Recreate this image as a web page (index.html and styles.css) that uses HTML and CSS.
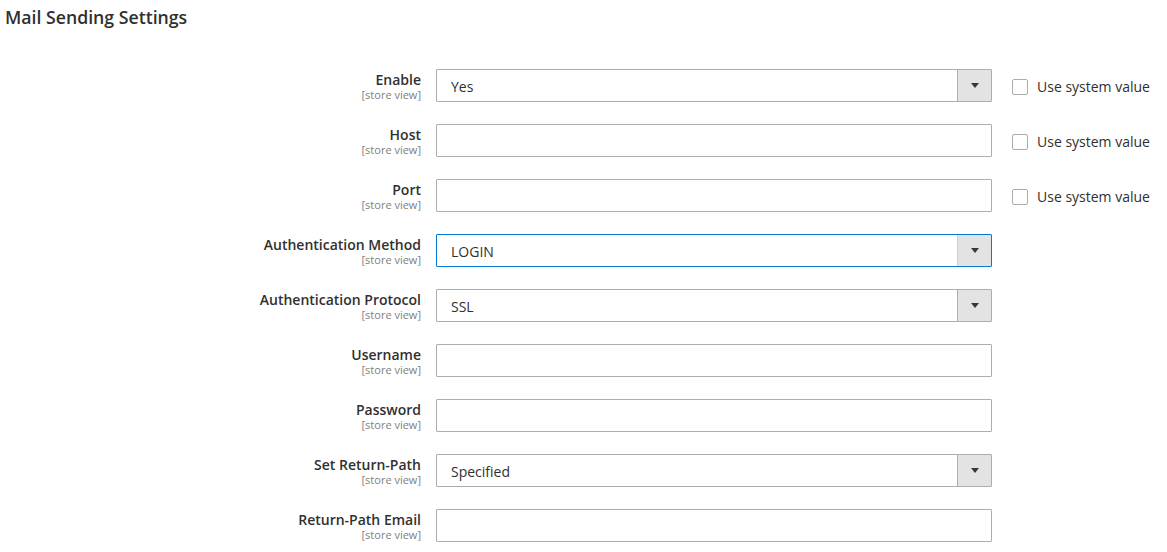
FILE: index.html
```html
<!DOCTYPE html>
<html>
<head>
<meta charset="utf-8">
<link rel="stylesheet" href="styles.css">
</head>
<body>
<div class="page">
  <h2 class="section-title">Mail Sending Settings</h2>
  <div class="form">
    <div class="row">
      <div class="label"><span class="name">Enable</span><span class="scope">[store view]</span></div>
      <div class="select-box"><select class="select"><option>Yes</option></select><span class="arrow"></span></div>
      <label class="sys"><span class="box"></span><span>Use system value</span></label>
    </div>
    <div class="row">
      <div class="label"><span class="name">Host</span><span class="scope">[store view]</span></div>
      <input class="text" type="text">
      <label class="sys"><span class="box"></span><span>Use system value</span></label>
    </div>
    <div class="row">
      <div class="label"><span class="name">Port</span><span class="scope">[store view]</span></div>
      <input class="text" type="text">
      <label class="sys"><span class="box"></span><span>Use system value</span></label>
    </div>
    <div class="row">
      <div class="label"><span class="name">Authentication Method</span><span class="scope">[store view]</span></div>
      <div class="select-box focus"><select class="select"><option>LOGIN</option></select><span class="arrow"></span></div>
    </div>
    <div class="row">
      <div class="label"><span class="name">Authentication Protocol</span><span class="scope">[store view]</span></div>
      <div class="select-box"><select class="select"><option>SSL</option></select><span class="arrow"></span></div>
    </div>
    <div class="row">
      <div class="label"><span class="name">Username</span><span class="scope">[store view]</span></div>
      <input class="text" type="text">
    </div>
    <div class="row">
      <div class="label"><span class="name">Password</span><span class="scope">[store view]</span></div>
      <input class="text" type="password">
    </div>
    <div class="row">
      <div class="label"><span class="name">Set Return-Path</span><span class="scope">[store view]</span></div>
      <div class="select-box"><select class="select"><option>Specified</option></select><span class="arrow"></span></div>
    </div>
    <div class="row">
      <div class="label"><span class="name">Return-Path Email</span><span class="scope">[store view]</span></div>
      <input class="text" type="text">
    </div>
  </div>
</div>
</body>
</html>
```
FILE: styles.css
```css
html, body {
  margin: 0;
  padding: 0;
  background: #ffffff;
}
body {
  font-family: "Open Sans", "Liberation Sans", sans-serif;
  color: #303030;
}
.page {
  padding: 6px 0 0 0;
}
.section-title {
  margin: 0 0 0 5px;
  font-size: 17.7px;
  line-height: 22px;
  font-weight: 600;
  color: #303030;
}
.form {
  margin-top: 41px;
  display: flex;
  flex-direction: column;
  gap: 22px;
}
.row {
  display: grid;
  grid-template-columns: 421px 556px auto;
  grid-template-rows: 33px;
  column-gap: 15px;
  align-items: start;
}
.label {
  display: flex;
  flex-direction: column;
  align-items: flex-end;
  text-align: right;
  padding-top: 2px;
}
.name {
  font-size: 14px;
  font-weight: 600;
  line-height: 18px;
  color: #303030;
}
.scope {
  font-size: 11px;
  line-height: 12px;
  color: #808080;
}
.text {
  box-sizing: border-box;
  height: 33px;
  width: 556px;
  margin: 0;
  border: 1px solid #adadad;
  border-radius: 1px;
  padding: 0 14px;
  font-family: inherit;
  font-size: 14px;
  background: #fff;
  outline: none;
}
.select-box {
  box-sizing: border-box;
  height: 33px;
  width: 556px;
  display: flex;
  border: 1px solid #adadad;
  border-radius: 1px;
  background: #fff;
}
.select-box.focus {
  border-color: #007bdb;
}
.select {
  flex: 1;
  -webkit-appearance: none;
  appearance: none;
  border: 0;
  margin: 0;
  padding: 2px 14px 0;
  background: transparent;
  font-family: inherit;
  font-size: 14px;
  color: #303030;
  outline: none;
}
.arrow {
  width: 33px;
  flex: none;
  background: #e3e3e3;
  border-left: 1px solid #adadad;
  display: flex;
  align-items: center;
  justify-content: center;
}
.select-box.focus .arrow {
  border-left-color: #b9d6ee;
}
.arrow::after {
  content: "";
  width: 0;
  height: 0;
  border-left: 4px solid transparent;
  border-right: 4px solid transparent;
  border-top: 5px solid #41362f;
}
.sys {
  display: flex;
  align-items: center;
  gap: 9px;
  margin-left: 5px;
  padding-top: 8px;
  font-size: 14px;
  line-height: 19px;
  color: #303030;
}
.box {
  box-sizing: border-box;
  width: 16px;
  height: 16px;
  border: 1px solid #adadad;
  border-radius: 2px;
  background: #fff;
}
```
